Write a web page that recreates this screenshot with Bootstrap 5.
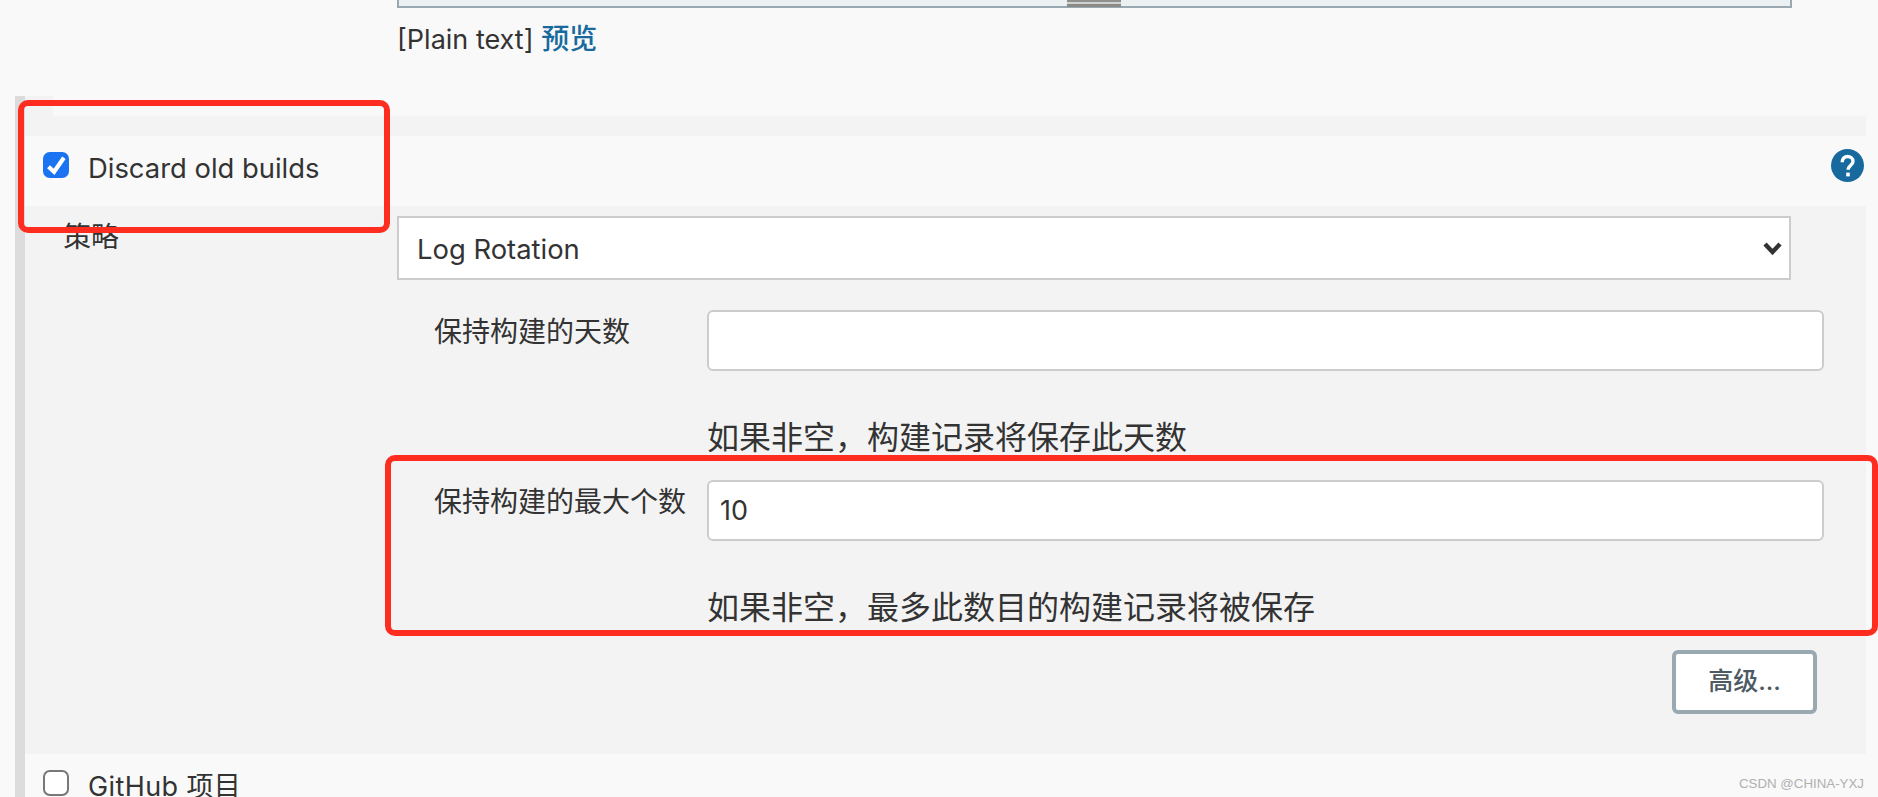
<!DOCTYPE html>
<html lang="zh-CN">
<head>
    <meta charset="UTF-8">
    <title>Discard old builds</title>
    <link href="https://cdn.jsdelivr.net/npm/bootstrap@5.3.0/dist/css/bootstrap.min.css" rel="stylesheet">
    <style>
        html, body { height: 797px; overflow: hidden; }
        body {
            background: #f9f9f9;
            color: #333;
            font-family: Inter, "Noto Sans CJK SC", sans-serif;
            font-size: 27px;
        }
        .shot { position: relative; width: 1878px; height: 797px; overflow: hidden; }

        /* textarea left over from the section above, cut by the top of the window */
        .cut-area {
            position: relative;
            margin-left: 397px;
            width: 1395px;
            height: 8px;
            background: #ebf0f3;
            border: 2px solid #9aa8b2;
            border-top: 0;
        }
        .grip {
            position: absolute;
            left: 668px;
            top: 0;
            width: 54px;
            height: 7px;
            background: linear-gradient(#8f908c 0 2px, #cfd2d0 2px 4px, #8a8b87 4px 7px);
        }
        .plain-row { margin-left: 397px; height: 88px; padding-top: 15px; line-height: 32px; }
        .plain-row a { color: #186a9e; font-size: 28px; font-weight: 500; text-decoration: none; }

        .settings { margin-left: 15px; border-left: 10px solid #dcdcdc; height: 701px; }
        .top-notch { width: 28px; height: 20px; background: #f3f3f3; }
        .top-band { width: 1841px; height: 20px; background: #f3f3f3; }
        .discard-row { width: 1841px; height: 70px; padding: 0 2px 0 18px; }
        .tick-label { margin-left: 19px; font-size: 27.4px; margin-bottom: 4px; }
        .big-check {
            width: 26px;
            height: 26px;
            margin: 0 0 12px;
            border: 2px solid #777;
            border-radius: 5px;
            flex: none;
        }
        .big-check:checked {
            background-color: #1a73f0;
            border-color: #1a73f0;
            background-size: 26px 26px;
            background-image: url("data:image/svg+xml,%3csvg xmlns='http://www.w3.org/2000/svg' viewBox='0 0 26 26'%3e%3cpath fill='none' stroke='%23fff' stroke-width='4.2' d='M5.500 14.800l5.600 5 9.800-14'/%3e%3c/svg%3e");
        }
        .help-dot { width: 33px; height: 33px; margin-bottom: 11px; }

        .panel { width: 1841px; height: 548px; background: #f3f3f3; position: relative; }
        .cap { font-size: 28px; line-height: 38px; color: #333; }
        .strategy { padding: 12px 0 0 372px; height: 105px; }
        .strategy .cap { width: 0; margin-left: -334px; white-space: nowrap; }
        .log-select {
            width: 1394px;
            height: 64px;
            margin: -2px 0 0 334px;
            padding: 4px 40px 0 18px;
            border: 2px solid #ccc;
            border-radius: 0;
            font-size: 27.4px;
            color: #333;
            background-image: url("data:image/svg+xml,%3csvg xmlns='http://www.w3.org/2000/svg' viewBox='0 0 19 13'%3e%3cpath fill='none' stroke='%23333' stroke-width='4.400' d='M2 2l7.500 8L17 2'/%3e%3c/svg%3e");
            background-size: 19px 13px;
            background-position: right 7px center;
        }
        .field { margin-left: 409px; height: 170px; }
        .field-cap { width: 273px; flex: none; padding-top: 2px; white-space: nowrap; }
        .num-input {
            width: 1117px;
            height: 61px;
            margin-top: -1px;
            border: 2px solid #ccc;
            border-radius: 6px;
            padding: 0 11px;
            font-size: 27px;
            color: #333;
            background: #fff;
        }
        .hint { margin-left: 273px; margin-top: 47px; font-size: 32px; line-height: 40px; color: #333; white-space: nowrap; }
        .more-wrap { width: 1792px; margin-top: -1px; justify-content: flex-end; }
        .more-btn {
            width: 145px;
            height: 64px;
            padding: 0;
            background: #fff;
            border: 4px solid #9aa8b2;
            border-radius: 6px;
            color: #4d5a63;
            font-size: 25px;
            font-weight: 500;
        }
        .github-row { padding: 16px 0 0 18px; }
        .github-row .big-check { background-color: #fff; }
        .github-row .tick-label { font-size: 27px; line-height: 28px; padding-top: 3px; letter-spacing: .4px; }

        /* annotations drawn over the screenshot */
        .red-box { position: absolute; border: 6px solid #ff2d20; border-radius: 10px; pointer-events: none; }
        .box-one { left: 18px; top: 100px; width: 372px; height: 133px; }
        .box-two { left: 385px; top: 455px; width: 1493px; height: 181px; }
        .mark-text {
            position: absolute;
            right: 14px;
            top: 774px;
            font-family: "Liberation Sans", sans-serif;
            font-size: 13.300px;
            color: #b0b0b0;
        }
    </style>
</head>
<body>
<div class="shot">
    <div class="cut-area"><span class="grip"></span></div>
    <div class="plain-row">[Plain text] <a href="#">预览</a></div>

    <div class="settings">
        <div class="top-notch"></div>
        <div class="top-band"></div>

        <div class="discard-row d-flex align-items-center">
            <input class="form-check-input big-check" type="checkbox" checked>
            <span class="tick-label flex-grow-1">Discard old builds</span>
            <svg class="help-dot" viewBox="0 0 33 33">
                <circle cx="16.500" cy="16.500" r="16.500" fill="#186a9e"/>
                <path d="M11.200 13.200c0-3.600 2.400-5.700 5.300-5.700s5.500 2 5.500 5c0 3.700-4.900 3.800-4.900 8.300" fill="none" stroke="#fff" stroke-width="3.400"/>
                <rect x="15.200" y="23.600" width="3.600" height="3.800" fill="#fff"/>
            </svg>
        </div>

        <div class="panel">
            <div class="strategy d-flex">
                <div class="cap">策略</div>
                <select class="form-select log-select">
                    <option>Log Rotation</option>
                </select>
            </div>

            <div class="field">
                <div class="d-flex">
                    <div class="cap field-cap">保持构建的天数</div>
                    <input class="form-control num-input" type="text">
                </div>
                <div class="hint">如果非空，构建记录将保存此天数</div>
            </div>

            <div class="field">
                <div class="d-flex">
                    <div class="cap field-cap">保持构建的最大个数</div>
                    <input class="form-control num-input" type="text" value="10">
                </div>
                <div class="hint">如果非空，最多此数目的构建记录将被保存</div>
            </div>

            <div class="more-wrap d-flex">
                <button class="btn more-btn" type="button">高级...</button>
            </div>
        </div>

        <div class="github-row d-flex">
            <input class="form-check-input big-check" type="checkbox">
            <span class="tick-label">GitHub 项目</span>
        </div>
    </div>

    <div class="red-box box-one"></div>
    <div class="red-box box-two"></div>
    <div class="mark-text">CSDN @CHINA-YXJ</div>
</div>
<script src="https://cdn.jsdelivr.net/npm/bootstrap@5.3.0/dist/js/bootstrap.bundle.min.js"></script>
</body>
</html>
